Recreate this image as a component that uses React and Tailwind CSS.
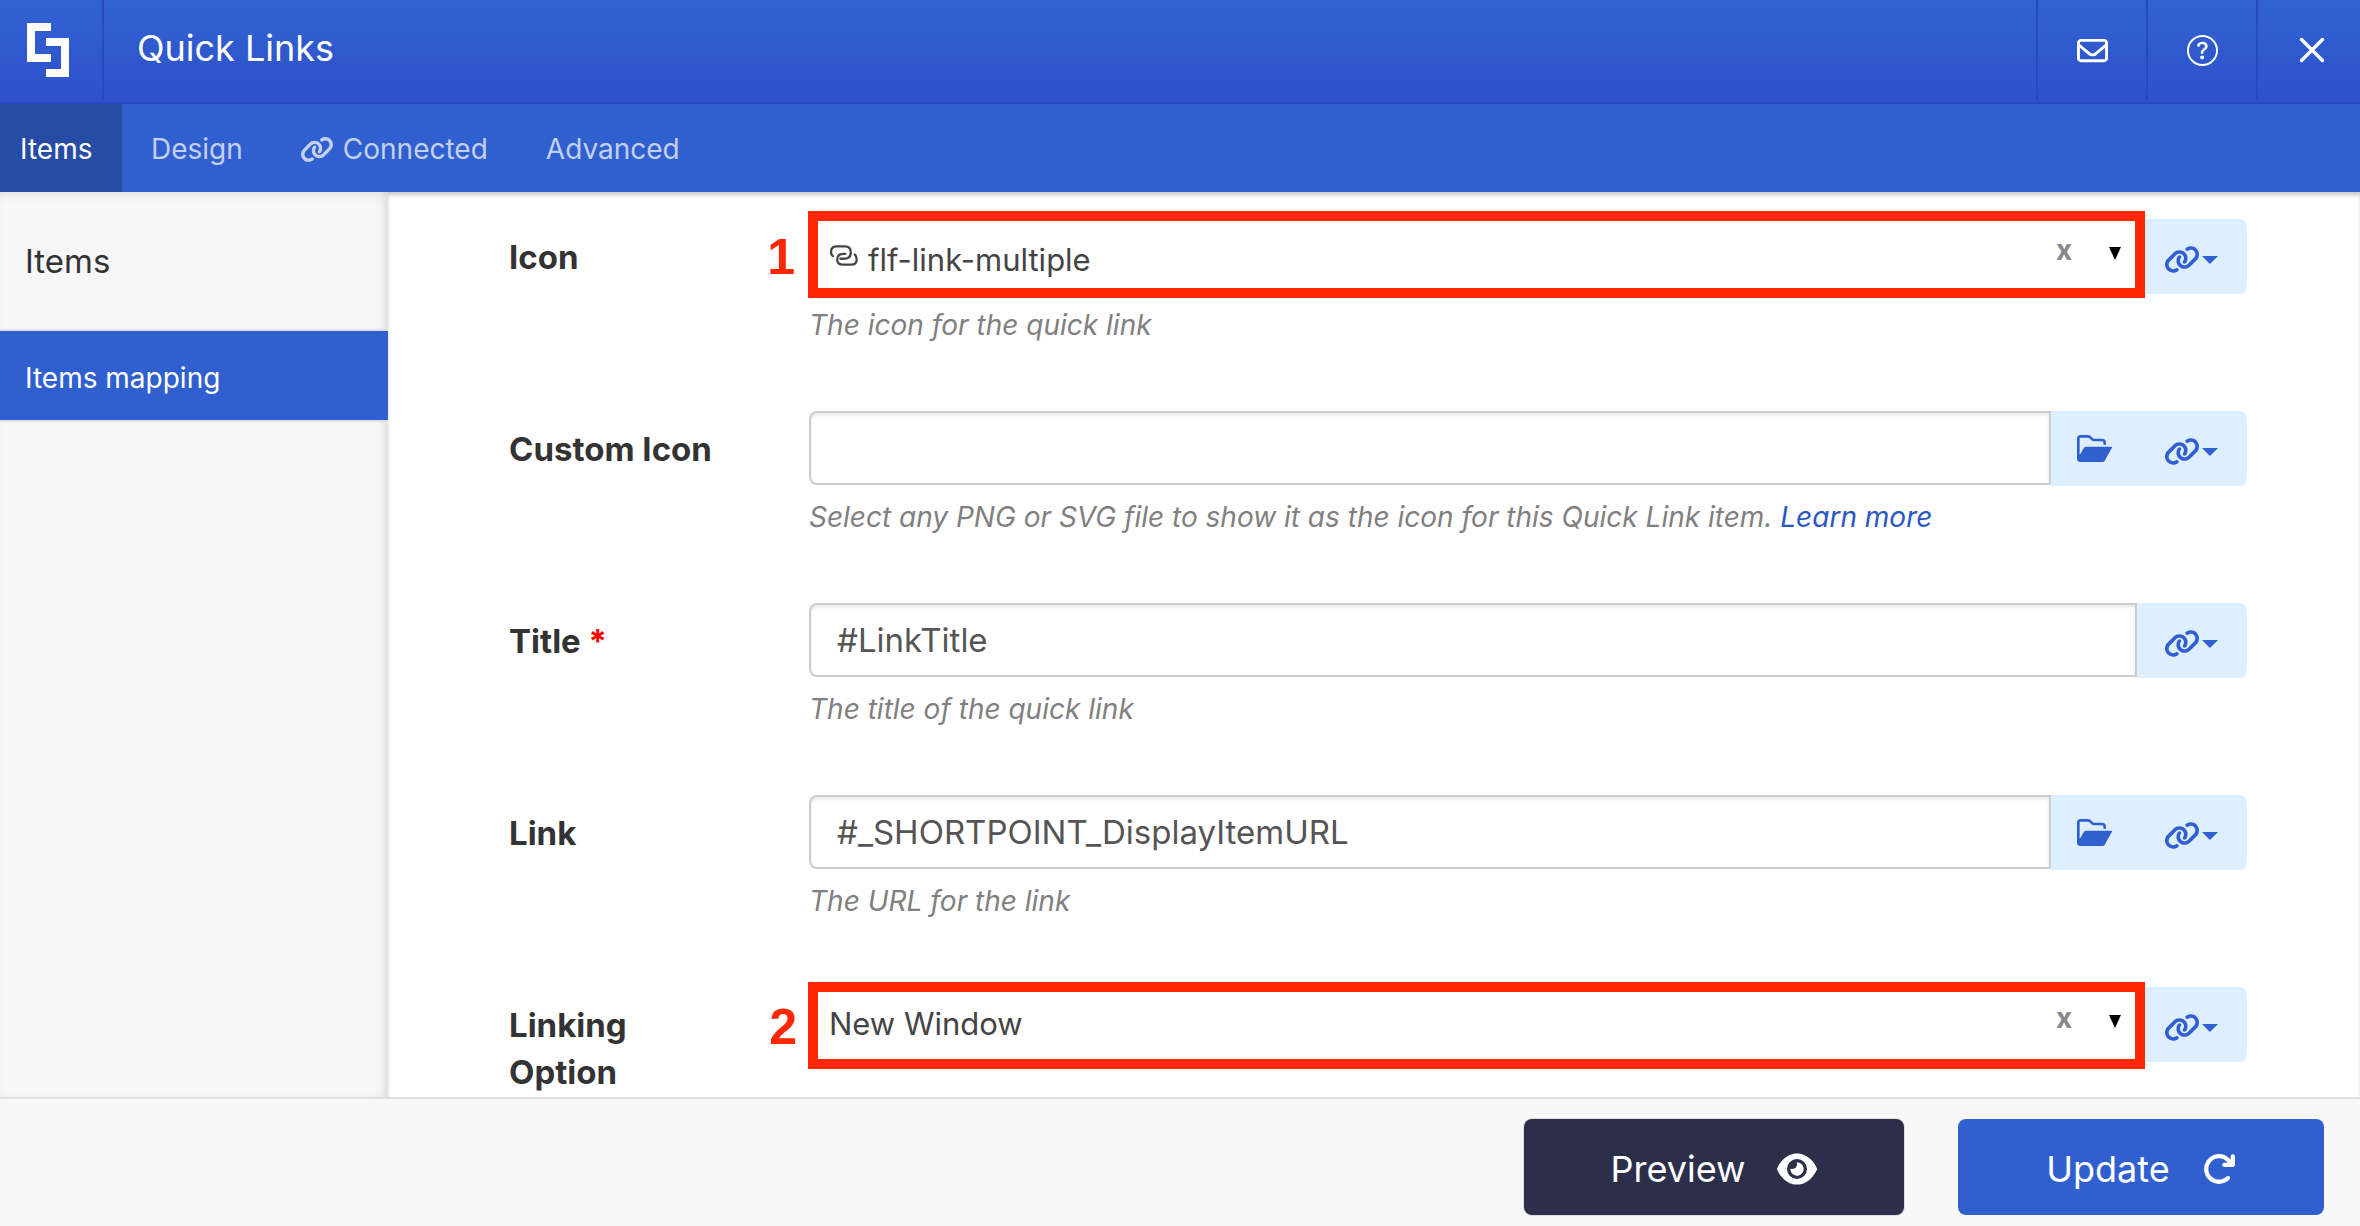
import { FaLink, FaEye, FaArrowRotateRight, FaRegEnvelope } from "react-icons/fa6";
import { BsQuestionCircle } from "react-icons/bs";

function Logo() {
  return (
    <svg width="42" height="54" viewBox="0 0 42 54" fill="none" stroke="#fff" strokeWidth="8" aria-hidden="true">
      <path d="M24 4H4v31h20" />
      <path d="M19 19h19v31H19" />
    </svg>
  );
}

function CloseIcon() {
  return (
    <svg width="26" height="26" viewBox="0 0 26 26" fill="none" stroke="#fff" strokeWidth="3.5" strokeLinecap="round" aria-hidden="true">
      <path d="M2.5 2.5l21 21M23.5 2.5l-21 21" />
    </svg>
  );
}

function LinkMultipleIcon() {
  return (
    <svg className="h-[21px] w-7" viewBox="90 44 86 64" fill="none" stroke="currentColor" strokeWidth="7" strokeLinecap="round" aria-hidden="true">
      <path d="M99 78Q93 73 93 66Q93 48 111 48H135Q154 48 154 66Q154 86 132 86H122" />
      <path d="M137 71H131Q112 71 112 89Q112 104 130 104H155Q172 104 172 88Q172 78 166 73" />
    </svg>
  );
}

function FolderIcon() {
  return (
    <svg className="h-[27px] w-[35px]" viewBox="0 0 105 81" aria-hidden="true">
      <path d="M4 72V11Q4 4 11 4H33Q37 4 40 7L46 13Q48 15 52 15H75Q83 15 83 23V26" fill="none" stroke="currentColor" strokeWidth="8" strokeLinecap="round" />
      <path d="M26 35H101q6 0 3 5L84 76q-2 5-6 5H10Q0 81 0 70V60H8L20 40q2-5 6-5z" fill="currentColor" />
    </svg>
  );
}

function Caret() {
  return (
    <svg className="h-2 w-4" viewBox="0 0 16 8" fill="currentColor" aria-hidden="true">
      <path d="M0 0h16l-8 8z" />
    </svg>
  );
}

function Row({ id, label, required, help, folder, callout, children }) {
  return (
    <div className="mb-[66px] grid grid-cols-[300px_minmax(0,1fr)]">
      <label htmlFor={id} className="pt-[15px] pr-20 text-[33px] leading-[47px] font-bold text-[#333]">
        {label}
        {required && <span className="text-[#f00]"> *</span>}
      </label>
      <div>
        <div className="flex h-[75px]">
          <div className="relative flex min-w-0 flex-1">
            {children}
            {callout}
          </div>
          <div className="flex rounded-r-lg bg-[#def] text-[#3060d0]">
            {folder && (
              <button type="button" aria-label="Browse files" className="flex w-[86px] items-center justify-center">
                <FolderIcon />
              </button>
            )}
            <button type="button" aria-label={`Connect ${label}`} className="flex w-[110px] items-center gap-0.5 pt-1.5 pl-[27px]">
              <FaLink className="h-[29px] w-9" />
              <Caret />
            </button>
          </div>
        </div>
        {help && <p className="mt-2.5 -mb-px text-[28px] leading-[42px] text-[#808080] italic">{help}</p>}
      </div>
    </div>
  );
}

function TextInput({ id, value }) {
  return (
    <input
      id={id}
      type="text"
      defaultValue={value}
      className="h-[74px] w-full min-w-0 rounded-l-lg border-2 border-[#ccc] bg-white px-[26px] text-[33px] text-[#555] shadow-[inset_0_2px_3px_rgba(0,0,0,0.1)] outline-none"
    />
  );
}

function SelectInput({ id, value, icon }) {
  return (
    <div className="flex w-full">
      {icon && <span className="pt-[26px] pl-[21px] text-[#444]">{icon}</span>}
      <select
        id={id}
        className={
          icon
            ? "min-w-0 flex-1 appearance-none bg-white pt-2 pl-2.5 text-[31px] text-[#444] outline-none"
            : "min-w-0 flex-1 appearance-none bg-white pl-5 text-[31px] text-[#444] outline-none"
        }
      >
        <option>{value}</option>
      </select>
      <button type="button" aria-label="Clear" className="flex h-[62px] w-14 items-center justify-center text-[28px] font-bold text-[#888]">
        x
      </button>
      <span className="flex w-[45px] items-start justify-center pt-7" aria-hidden="true">
        <svg width="12" height="13" viewBox="0 0 12 13">
          <path d="M0 0h12L6 13z" />
        </svg>
      </span>
    </div>
  );
}

function Callout({ number, low }) {
  return (
    <>
      <div
        className={
          low
            ? "pointer-events-none absolute -top-[5px] -right-2 -bottom-[7px] -left-px z-10 border-10 border-[#ff2600]"
            : "pointer-events-none absolute -top-2 -right-2 -bottom-1 -left-px z-10 border-10 border-[#ff2600]"
        }
      />
      <span
        className={
          low
            ? "absolute top-3 right-full mr-3 font-['Liberation_Sans',sans-serif] text-[50px] leading-[56px] font-bold text-[#ff2600]"
            : "absolute top-2.5 right-full mr-3.5 font-['Liberation_Sans',sans-serif] text-[50px] leading-[56px] font-bold text-[#ff2600]"
        }
      >
        {number}
      </span>
    </>
  );
}

export default function App() {
  return (
    <div className="flex h-screen flex-col overflow-hidden bg-white font-['Inter',sans-serif]">
      <header className="flex h-26 shrink-0 items-start border-b-2 border-[#2848bd] bg-linear-to-b from-[#3063d2] to-[#2f50ca] text-white">
        <div className="flex h-25 w-26 shrink-0 items-center border-r-2 border-[#2848bd] pl-[27px]">
          <Logo />
        </div>
        <h1 className="flex-1 pl-[33px] text-4xl leading-[96px]">Quick Links</h1>
        <button type="button" aria-label="Messages" className="flex h-25 w-[110px] items-center justify-center border-l-2 border-[#2848bd]">
          <FaRegEnvelope className="size-[31px]" />
        </button>
        <button type="button" aria-label="Help" className="flex h-25 w-[110px] items-center justify-center border-l-2 border-[#2848bd]">
          <BsQuestionCircle className="size-[31px]" />
        </button>
        <button type="button" aria-label="Close" className="flex h-25 w-26 items-center border-l-2 border-[#2848bd] pl-[41px]">
          <CloseIcon />
        </button>
      </header>

      <nav className="flex h-22 shrink-0 bg-[#3060d0] text-[28px] text-[#c3d0f2]">
        <button type="button" className="w-[122px] bg-[#264ca6] pt-0.5 pl-5 text-left text-white">Items</button>
        <button type="button" className="pt-0.5 pl-[29px]">Design</button>
        <button type="button" className="flex items-center gap-[9px] pt-0.5 pl-[57px]">
          <FaLink className="h-[27px] w-[34px]" />
          Connected
        </button>
        <button type="button" className="pt-0.5 pl-[58px]">Advanced</button>
      </nav>

      <div className="flex min-h-0 flex-1">
        <aside className="w-[388px] shrink-0 bg-[#f7f7f7] shadow-[inset_-5px_3px_12px_-3px_rgba(0,0,0,0.14)]">
          <h2 className="h-[137px] pt-11 pl-[25px] text-[33px] leading-[50px] text-[#333]">Items</h2>
          <button type="button" className="h-[93px] w-full border-y-2 border-[#e0e0e0] bg-[#3060d0] pt-1 pl-[25px] text-left text-[28px] text-white">
            Items mapping
          </button>
        </aside>
        <main className="min-w-0 flex-1 overflow-hidden pt-[27px] pr-[113px] pl-[121px] shadow-[inset_0_4px_4px_-1px_rgba(0,0,0,0.22)]">
          <Row id="icon" label="Icon" help="The icon for the quick link" callout={<Callout number="1" />}>
            <SelectInput id="icon" value="flf-link-multiple" icon={<LinkMultipleIcon />} />
          </Row>
          <Row
            id="custom-icon"
            label="Custom Icon"
            folder
            help={
              <>
                Select any PNG or SVG file to show it as the icon for this Quick Link item.{" "}
                <a href="#learn-more" className="text-[#2a56c6]">Learn more</a>
              </>
            }
          >
            <TextInput id="custom-icon" value="" />
          </Row>
          <Row id="title" label="Title" required help="The title of the quick link">
            <TextInput id="title" value="#LinkTitle" />
          </Row>
          <Row id="link" label="Link" folder help="The URL for the link">
            <TextInput id="link" value="#_SHORTPOINT_DisplayItemURL" />
          </Row>
          <Row id="linking-option" label="Linking Option" callout={<Callout number="2" low />}>
            <SelectInput id="linking-option" value="New Window" />
          </Row>
        </main>
      </div>

      <footer className="flex h-[129px] shrink-0 items-start justify-end gap-[54px] border-t-2 border-[#e0e0e0] bg-[#f8f8f8] pt-5 pr-9 text-4xl text-white">
        <button type="button" className="flex h-24 w-[380px] items-center justify-center gap-8 rounded-lg bg-[#2b2f4a] pt-1 shadow-[0_0_0_1px_#dcdcdc]">
          Preview
          <FaEye className="h-9 w-10" />
        </button>
        <button type="button" className="flex h-24 w-[366px] items-center justify-center gap-8 rounded-lg bg-[#3060d0] pt-1">
          Update
          <FaArrowRotateRight className="size-[34px]" />
        </button>
      </footer>
    </div>
  );
}
